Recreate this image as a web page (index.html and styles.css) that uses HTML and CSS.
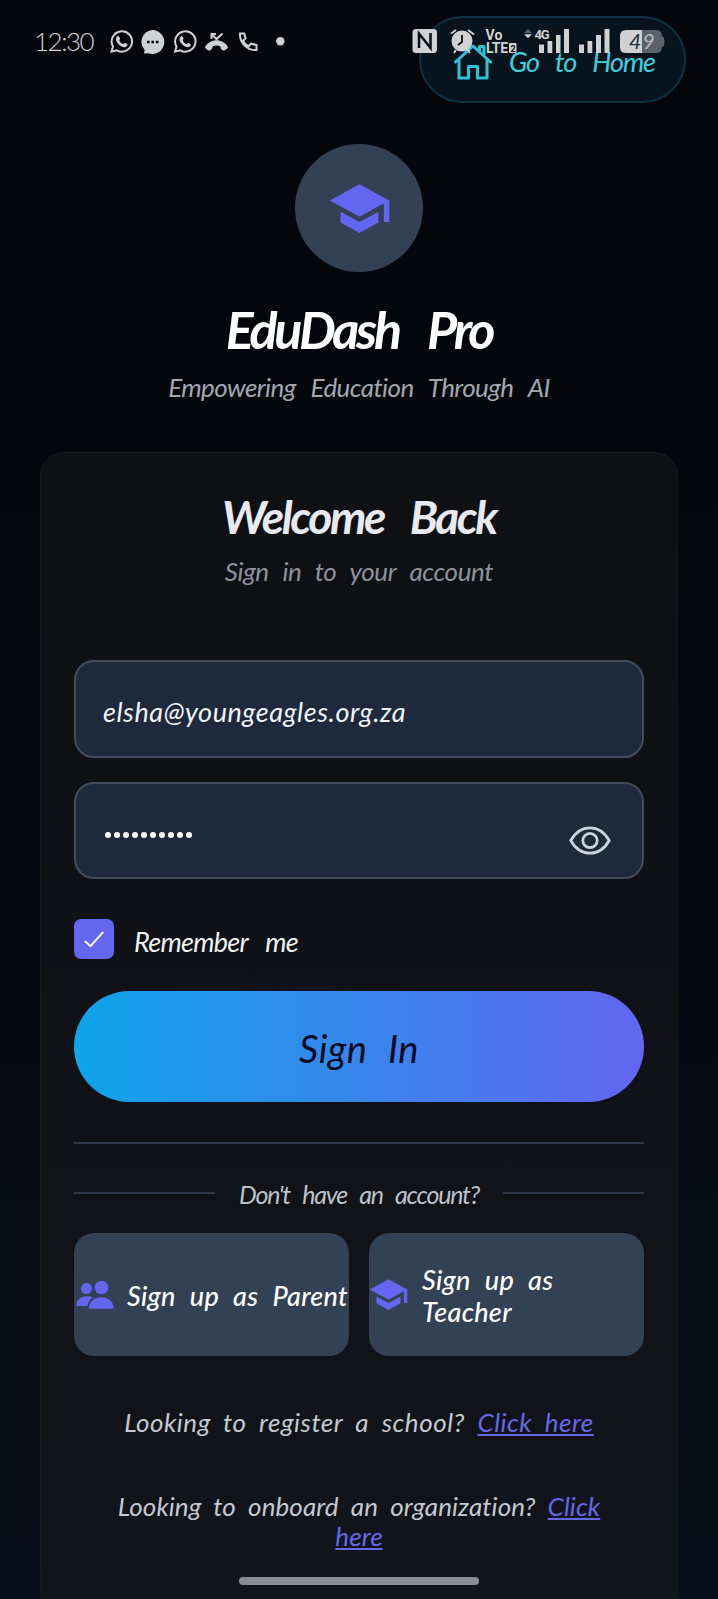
FILE: index.html
```html
<!DOCTYPE html>
<html lang="en">
<head>
<meta charset="utf-8">
<title>EduDash Pro</title>
<link rel="stylesheet" href="styles.css">
</head>
<body>
<div class="screen">
  <header class="top">
    <a class="home">
      <svg class="home-icon" viewBox="0 0 38 36"><path d="M1.5 18 19 2l17.500 16M5 15v19h9.500V22.500h9V34H33V15M25.500 7.500V2.500H30v9"/></svg>
      <span class="t-home">Go to Home</span>
    </a>
  </header>

  <div class="status">
    <span class="clock">12:30</span>
    <svg class="status-left" viewBox="0 0 180 26">
      <g id="wa"><path class="ln" d="M3.500 22.700 5 17.500A10.200 10.200 0 1 1 8.800 21.300Z"/><path class="fl" d="M9.300 7.400c.8-.8 1.500-.5 1.900.3l.8 1.900c.3.800-.9 1.500-.7 2 .8 1.700 2 2.800 3.700 3.500.6.200 1.200-1.300 1.900-1l2.100 1c1.200.7-.4 3-2 3.100-4.400.2-9.400-4.900-9-8.500.1-1 .6-1.700 1.300-2.300Z"/></g>
      <path class="fl" d="M44.500 1A12 12 0 1 1 40 24.200l-4 .2.700-3.300A12 12 0 0 1 44.500 1Z"/>
      <path class="dk" d="M39 11.800h2.600v2.400H39zm4.400 0H46v2.400h-2.600zm4.400 0h2.600v2.400h-2.600z"/>
      <use href="#wa" x="63.500"/>
      <path class="fl" d="M97 18c5-9 18-9 23 0 .5 1-3.500 4-4.800 3.500-2-.8-2.500-2-3-4.300-2.700-1-4.800-1-7.400 0-.5 2.300-1 3.500-3 4.300C100.500 22 96.500 19 97 18Z"/>
      <path class="ln" d="M103.500 10V5H108M104 5.500l4.500 4.500 6-5.500"/>
      <path class="ln" d="M132 4.500h4.300l1.300 5-2.600 2.300c1.300 2.600 2.900 4.200 5.500 5.500l2.600-2.600 5.400 1.300v5C139.500 21.800 131.500 14 132 4.500Z"/>
      <circle class="fl" cx="172.300" cy="12.300" r="4.200"/>
    </svg>
    <svg class="status-right" viewBox="0 0 254 28">
      <rect class="fl" x="0.500" y="1" width="24.500" height="24" rx="3.500"/>
      <path class="dkl" d="M7 20V5.500L18.500 20V5"/>
      <path class="ln" d="M39 5.500 44 2m12 0 6 4.500M44 22l-2 3m14-3 2 3"/>
      <circle class="fl" cx="50" cy="13" r="10.500"/>
      <path class="dkt" d="M50 7v7l-4 3"/>
      <path class="fl" d="M112 6.200h8l-4 4z"/><path class="dim" d="M112 5h8l-4-4z"/>
      <path class="fl" d="M127 16.500h5V25h-5zM135.500 13h4.800v12h-4.800zM144 7h4.500v18H144zM152 1h5v24h-5zM167 16.500h5V25h-5zM175.500 13h4.800v12h-4.800zM184 7h5v18h-5zM192.500 1h5v24h-5z"/>
      <path class="dim" d="M230 2h14q6 0 6 6 2.500 1 2.500 6t-2.500 5q0 6-6 6h-14z"/>
      <path class="fl" d="M214 2h16v23h-16q-6 0-6-6V8q0-6 6-6Z"/>
      <text class="st" x="73.500" y="11.500" textLength="17">Vo</text>
      <text class="st" x="74" y="25" textLength="22">LTE</text>
      <rect class="fl" x="97" y="15" width="7.500" height="10" rx="1"/>
      <text class="sim" x="98.500" y="23.500">2</text>
      <text class="st sm" x="122.500" y="10.500" textLength="15">4G</text>
      <text class="bat" x="217" y="21" textLength="12">4</text>
      <text class="bat bat2" x="230.500" y="21" textLength="11">9</text>
    </svg>
  </div>

  <div class="logo">
    <svg class="cap" viewBox="0 0 24 24"><path d="M5 13.180v4L12 21l7-3.820v-4L12 17l-7-3.820ZM12 3 1 9l11 6 9-4.910V17h2V9L12 3Z"/></svg>
  </div>
  <h1 class="title">EduDash Pro</h1>
  <p class="tagline">Empowering Education Through AI</p>

  <main class="card">
    <h2 class="welcome">Welcome Back</h2>
    <p class="sub">Sign in to your account</p>
    <div class="field"><span class="email">elsha@youngeagles.org.za</span></div>
    <div class="field password">
      <span class="dots"><i></i><i></i><i></i><i></i><i></i><i></i><i></i><i></i><i></i><i></i></span>
      <svg class="eye" viewBox="0 0 42 29"><path d="M1.800 14.500C6 7 13 1.800 21 1.800S36 7 40.200 14.500C36 22 29 27.200 21 27.200S6 22 1.800 14.500Z"/><circle cx="21" cy="14.500" r="7.200"/></svg>
    </div>
    <div class="remember">
      <span class="check"><svg viewBox="0 0 20 17"><path d="M.8 10 6.500 15.200 19.200 1"/></svg></span>
      <span class="t-remember">Remember me</span>
    </div>
    <div class="signin"><span>Sign In</span></div>
    <div class="rule"></div>
    <div class="divider"><span class="t-divider">Don't have an account?</span></div>
    <div class="signup">
      <div class="option">
        <svg class="people" viewBox="0 0 38 29"><circle cx="10.500" cy="8.500" r="5.500"/><circle cx="25.500" cy="7.500" r="6.800"/><path d="M.5 26c-.8-6 5-9.700 10.500-9.700 2.600 0 4.200.5 5.800 1.300-3 2-4.800 4.600-5.300 8.400ZM13 28c0-7 6-10.700 12.300-10.700S37.500 21 37.500 28q0 .8-1 .8H14q-1 0-1-.8Z"/></svg>
        <span class="t-option">Sign up as Parent</span>
      </div>
      <div class="option">
        <svg class="cap small" viewBox="0 0 24 24"><path d="M5 13.180v4L12 21l7-3.820v-4L12 17l-7-3.820ZM12 3 1 9l11 6 9-4.910V17h2V9L12 3Z"/></svg>
        <span class="t-option">Sign up as<br>Teacher</span>
      </div>
    </div>
    <p class="more">Looking to register a school? <a>Click here</a></p>
    <p class="more org">Looking to onboard an organization? <a>Click<br>here</a></p>
  </main>
  <div class="indicator"></div>
</div>
</body>
</html>
```
FILE: styles.css
```css
* { box-sizing: border-box; }
body { margin: 0; background: #05060b; }
h1, h2, p { margin: 0; font-weight: 400; }
.screen {
  position: relative;
  width: 718px;
  height: 1599px;
  overflow: hidden;
  background: linear-gradient(180deg, #05060b 0%, #05060b 28%, #070a14 65%, #090f1a 100%);
  font-family: Lato, "Open Sans", sans-serif;
  font-style: italic;
  font-size: 26px;
  font-variant-ligatures: none;
  white-space: nowrap;
}
.top { display: flex; justify-content: flex-end; padding: 16px 32px 0 0; }
.home {
  display: flex;
  width: 267px;
  height: 87px;
  padding: 26px 0 0 33px;
  gap: 17px;
  border: 2px solid #0d3343;
  border-radius: 44px;
  background: #07131d;
  color: #3cd0df;
}
.home-icon { width: 38px; height: 36px; fill: none; stroke: #2cc4d4; stroke-width: 3; stroke-linejoin: round; stroke-linecap: round; }
.t-home { font-size: 27px; line-height: 36px; letter-spacing: -1.100px; word-spacing: 11px; }

/* system bar overlaying the page */
.status { position: absolute; inset: 0 0 auto 0; height: 80px; color: #d4d4d6; }
.clock { position: absolute; left: 34px; top: 26px; font-size: 26px; line-height: 30px; font-weight: 300; font-style: normal; letter-spacing: -1.500px; }
.status-left { position: absolute; left: 108px; top: 29px; width: 180px; height: 26px; }
.status-right { position: absolute; left: 412px; top: 28px; width: 254px; height: 28px; overflow: visible; }
.fl { fill: #d0d1d3; }
.dk { fill: #0a0b10; }
.ln { fill: none; stroke: #d0d1d3; stroke-width: 2; }
.dkl { fill: none; stroke: #0a1118; stroke-width: 2.500; }
.dkt { fill: none; stroke: #0a1118; stroke-width: 1.800; }
.dim { fill: #59626a; }
.st { fill: #d0d1d3; font: 700 14px Roboto, sans-serif; }
.sm { font-size: 13px; }
.sim { fill: #0a1118; font: 700 9px Roboto, sans-serif; }
.bat { fill: #222a32; font: italic 400 21px Lato, sans-serif; }
.bat2 { fill: #b5bac0; }

.logo {
  display: flex;
  align-items: center;
  justify-content: center;
  width: 128px;
  height: 128px;
  margin: 41px auto 0;
  border-radius: 50%;
  background: #334155;
}
.cap { width: 65px; height: 65px; fill: #6366f1; }
.title { margin-top: 25px; font-size: 52px; line-height: 64px; font-weight: 700; color: #fff; text-align: center; word-spacing: 20px; letter-spacing: -3.200px; }
.tagline { margin-top: 10px; line-height: 32px; text-align: center; color: #a2a7b2; word-spacing: 9.500px; letter-spacing: -.600px; }

.card {
  width: 638px;
  height: 1164px;
  margin: 49px auto 0;
  padding: 35px 33px 0;
  border: 1px solid #191b20;
  border-radius: 24px;
  background: linear-gradient(180deg, #0f1013, #111319 80%, #12151c);
}
.welcome { font-size: 46px; line-height: 58px; font-weight: 700; text-align: center; color: #e9e9f1; word-spacing: 18px; letter-spacing: -2.400px; }
.sub { margin-top: 9px; line-height: 32px; text-align: center; color: #8f929d; word-spacing: 8px; letter-spacing: -.400px; }
.field {
  display: flex;
  align-items: center;
  height: 98px;
  margin-top: 73px;
  padding: 0 31px 0 27px;
  border: 2px solid #414c5d;
  border-radius: 20px;
  background: #1e293b;
}
.email { font-size: 27px; line-height: 34px; color: #f0f4f8; padding-top: 5px; letter-spacing: .550px; }
.field.password { margin-top: 24px; height: 97px; justify-content: space-between; }
.dots { display: flex; gap: 3px; margin: 8px 0 0 2px; }
.dots i { width: 6px; height: 6px; border-radius: 50%; background: #fff; }
.eye { width: 42px; height: 29px; margin-top: 20px; fill: none; stroke: #cbd5e1; stroke-width: 2.800; }
.remember { display: flex; align-items: center; gap: 20px; margin-top: 40px; height: 40px; }
.check { display: flex; align-items: center; justify-content: center; width: 40px; height: 40px; border-radius: 7px; background: #6366f1; }
.check svg { width: 20px; height: 17px; fill: none; stroke: #f4f4ff; stroke-width: 2; }
.t-remember { padding-top: 5px; font-size: 27px; line-height: 34px; color: #f1f1f3; word-spacing: 12px; letter-spacing: -.700px; }
.signin {
  display: flex;
  align-items: center;
  justify-content: center;
  height: 111px;
  margin-top: 32px;
  padding-top: 3px;
  border-radius: 56px;
  background: linear-gradient(90deg, #0ea5e9, #6366f1);
  color: #050c20;
  font-size: 38px;
  letter-spacing: .500px;
  word-spacing: 11px;
}
.rule { height: 2px; margin-top: 40px; background: #2d3849; }
.divider { display: flex; align-items: center; justify-content: space-between; height: 30px; margin-top: 34px; color: #bfc1c8; font-size: 25px; line-height: 30px; }
.divider::before, .divider::after { content: ""; width: 141px; height: 2px; background: #2d3849; }
.t-divider { padding-top: 2px; word-spacing: 7.500px; letter-spacing: -1.200px; }
.signup { display: grid; grid-template-columns: 275px 275px; gap: 20px; margin-top: 25px; }
.option { display: flex; align-items: center; height: 123px; gap: 13px; padding-left: 2px; border-radius: 20px; background: #334155; }
.people { width: 38px; height: 29px; fill: #6366f1; flex: none; }
.cap.small { width: 41px; height: 41px; margin: 0 0 0 -3px; flex: none; }
.t-option { padding-top: 2px; font-size: 27px; line-height: 32px; font-weight: 500; color: #fff; word-spacing: 7.500px; letter-spacing: .300px; }
.more { margin-top: 51px; line-height: 30px; text-align: center; color: #c5c9d1; word-spacing: 6px; letter-spacing: .500px; }
.more.org { margin-top: 54px; letter-spacing: .080px; }
.more a { color: #6568e8; text-decoration: underline; text-decoration-thickness: 2px; text-underline-offset: 2px; text-decoration-skip-ink: none; }
.indicator { position: absolute; left: 239px; top: 1577px; width: 240px; height: 8px; border-radius: 4px; background: #8b8c90; }
```
